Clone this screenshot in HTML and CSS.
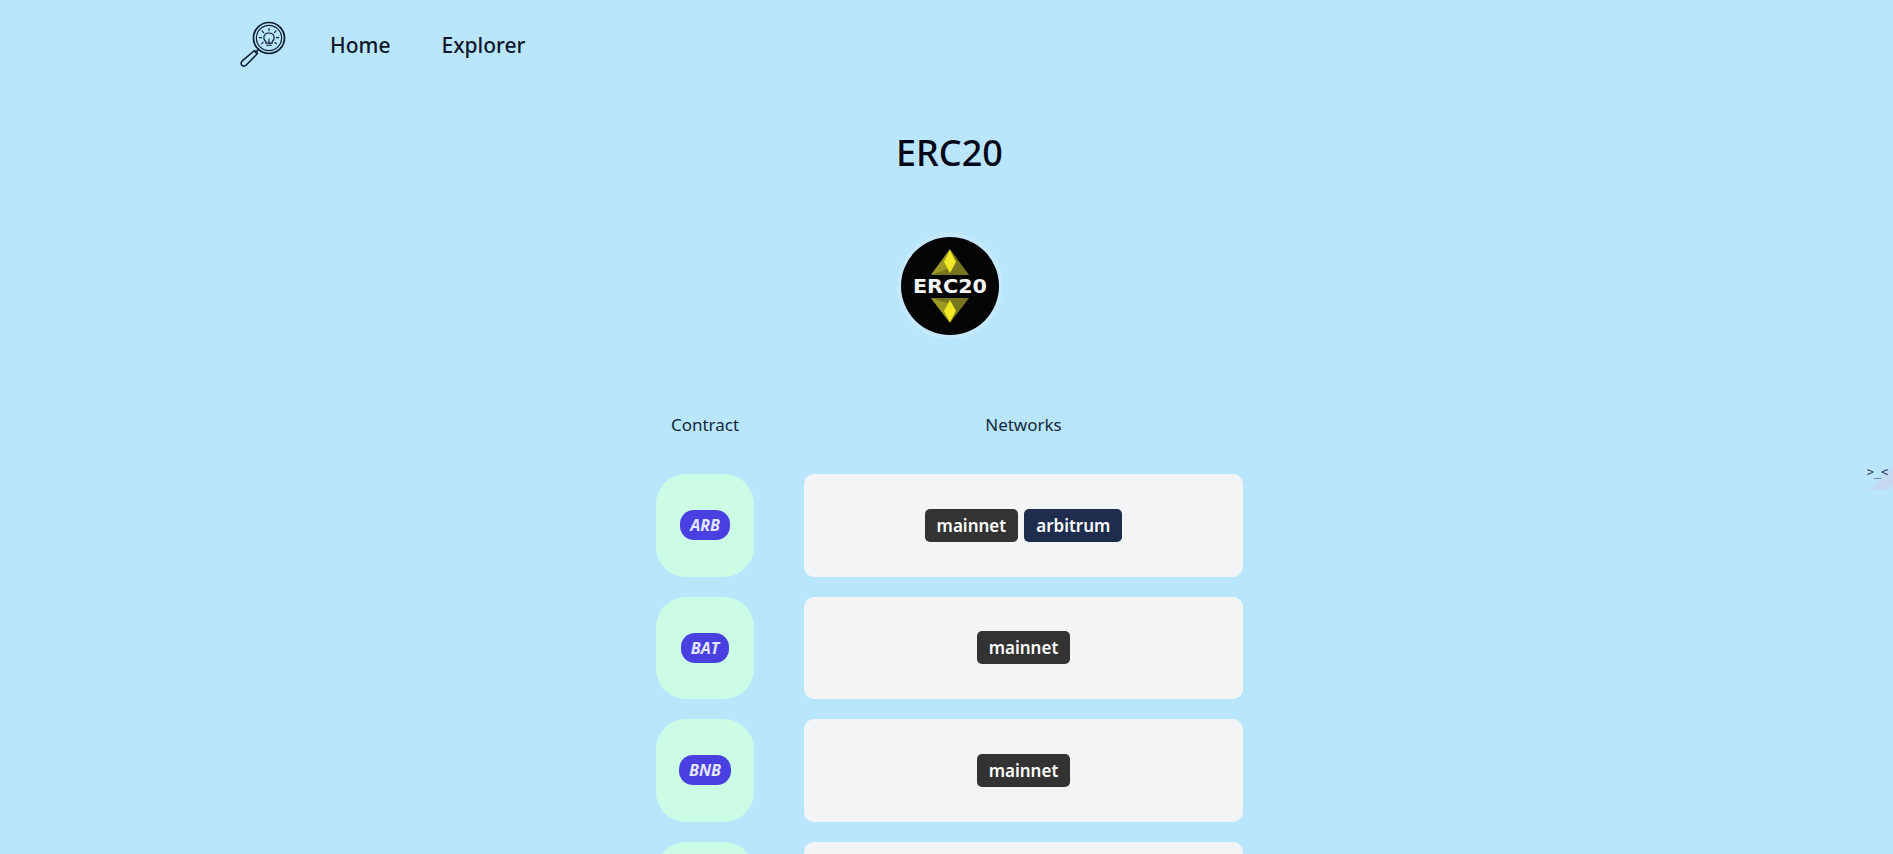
FILE: index.html
```html
<!DOCTYPE html>
<html lang="en">
<head>
    <meta charset="utf-8">
    <meta name="viewport" content="width=device-width, initial-scale=1.0">
    <title>ERC20</title>
    <link rel="stylesheet" href="styles.css">
</head>
<body>
    <header class="nav">
        <svg class="nav-logo" viewBox="0 0 48 48" fill="none" stroke="#0b1b2b" stroke-width="1.5" stroke-linecap="round" stroke-linejoin="round" aria-label="logo">
            <circle cx="30" cy="18" r="15.5" stroke-width="1.7"/>
            <circle cx="30" cy="18" r="12.6" stroke-width="1.2"/>
            <path d="M19.5 29.5 16.5 32.5" stroke-width="1.7"/>
            <path d="M15.5 30.5 18.5 33.5 7 45.2C5.8 46.4 4 46.4 2.9 45.3 1.8 44.2 1.8 42.4 3 41.2Z" stroke-width="1.6"/>
            <path d="M26.8 21.6C25.2 20.4 24.6 18.8 24.8 17.2 25.1 14.7 27.3 13 29.9 13 32.6 13 34.8 14.7 35.1 17.2 35.3 18.8 34.7 20.4 33.2 21.6V23.2H26.8Z" stroke-width="1.2"/>
            <path d="M27.6 25.2H32.4M30 23V19" stroke-width="1.1"/>
            <path d="M30 8.2V10.6M23 10.9 24.7 12.6M37 10.9 35.3 12.6M20.4 17.6H22.6M37.4 17.6H39.6M22.5 23.8 24.2 22.4M37.5 23.8 35.8 22.4" stroke-width="1.1"/>
        </svg>
        <a class="nav-link" href="#">Home</a>
        <a class="nav-link" href="#">Explorer</a>
    </header>

    <main class="content">
        <h1 class="title">ERC20</h1>

        <svg class="token-logo" viewBox="0 0 108 108" aria-label="ERC20 logo">
            <circle cx="54" cy="54" r="53" fill="#c4e9fc"/>
            <circle cx="54" cy="54" r="49" fill="#050505"/>
            <path d="M54 17 35 43H73Z" fill="#77751d"/>
            <path d="M54 17 35 43 54 36Z" fill="#9c9a24"/>
            <path d="M54 18 48 30 54 41 60 30Z" fill="#f2e925"/>
            <path d="M35 66H73L54 91Z" fill="#77751d"/>
            <path d="M35 66 54 91 54 72Z" fill="#9c9a24"/>
            <path d="M54 90 48 79 54 68 60 79Z" fill="#f2e925"/>
            <text class="token-logo-text" x="54" y="61" text-anchor="middle" textLength="74" lengthAdjust="spacingAndGlyphs">ERC20</text>
        </svg>

        <div class="table">
            <div class="table-head">Contract</div>
            <div class="table-head">Networks</div>

            <div class="contract-cell"><a class="contract-pill" href="#">ARB</a></div>
            <div class="network-cell">
                <span class="badge">mainnet</span>
                <span class="badge badge-arbitrum">arbitrum</span>
            </div>

            <div class="contract-cell"><a class="contract-pill" href="#">BAT</a></div>
            <div class="network-cell">
                <span class="badge">mainnet</span>
            </div>

            <div class="contract-cell"><a class="contract-pill" href="#">BNB</a></div>
            <div class="network-cell">
                <span class="badge">mainnet</span>
            </div>

            <div class="contract-cell"></div>
            <div class="network-cell"></div>
        </div>
    </main>

    <div class="side-tab">&gt;_&lt;</div>
</body>
</html>
```

FILE: styles.css
```css
html, body {
    height: 100%;
    overflow: hidden;
}

body {
    margin: 0;
    background-color: #bae6fd;
    color: #0f172a;
    font-family: "Noto Sans", "Open Sans", sans-serif;
}

.nav {
    display: flex;
    align-items: center;
    height: 48px;
    padding: 20px 0 0 239px;
}

.nav-logo {
    width: 48px;
    height: 48px;
    margin-right: 43px;
}

.nav-link {
    margin-top: 2px;
    margin-right: 51px;
    color: #0f172a;
    font-size: 21px;
    font-weight: 500;
    text-decoration: none;
}

.content {
    display: flex;
    flex-direction: column;
    align-items: center;
    padding-left: 6px;
}

.title {
    margin: 59px 0 0;
    font-size: 36px;
    line-height: 52px;
    font-weight: 500;
    color: #020617;
}

.token-logo {
    width: 108px;
    height: 108px;
    margin-top: 53px;
}

.token-logo-text {
    fill: #f5f5f5;
    font-family: "DejaVu Sans", sans-serif;
    font-size: 20px;
    font-weight: 700;
}

.table {
    display: grid;
    grid-template-columns: 98px 439px;
    grid-template-rows: 43px;
    grid-auto-rows: 102.5px;
    column-gap: 50px;
    row-gap: 20px;
    margin-top: 71px;
}

.table-head {
    font-size: 17px;
    line-height: 28px;
    text-align: center;
    color: #12283a;
}

.contract-cell {
    display: flex;
    align-items: center;
    justify-content: center;
    background-color: #ccfbe6;
    border-radius: 30px;
}

.contract-pill {
    padding: 5px 10px;
    background-color: #4a40e2;
    border-radius: 14px;
    color: #e5e7ff;
    font-family: "Open Sans", sans-serif;
    font-size: 16px;
    line-height: 20px;
    font-style: italic;
    font-weight: 700;
    text-decoration: none;
}

.network-cell {
    display: flex;
    align-items: center;
    justify-content: center;
    gap: 6px;
    background-color: #f3f4f6;
    border-radius: 10px;
}

.badge {
    padding: 3px 12px;
    background-color: #333333;
    border-radius: 5px;
    color: #ffffff;
    font-size: 17px;
    line-height: 27px;
    font-weight: 600;
}

.badge-arbitrum {
    background-color: #1e2d4d;
}

.side-tab {
    position: fixed;
    top: 462px;
    right: 0;
    width: 31px;
    height: 28px;
    background: linear-gradient(135deg, #bae6fd 50%, #c5d6f2 72%, #c5d6f2 85%, #bae6fd 100%);
    color: #334155;
    font-family: "DejaVu Sans Mono", monospace;
    font-size: 12px;
    line-height: 20px;
    text-align: center;
}
```
